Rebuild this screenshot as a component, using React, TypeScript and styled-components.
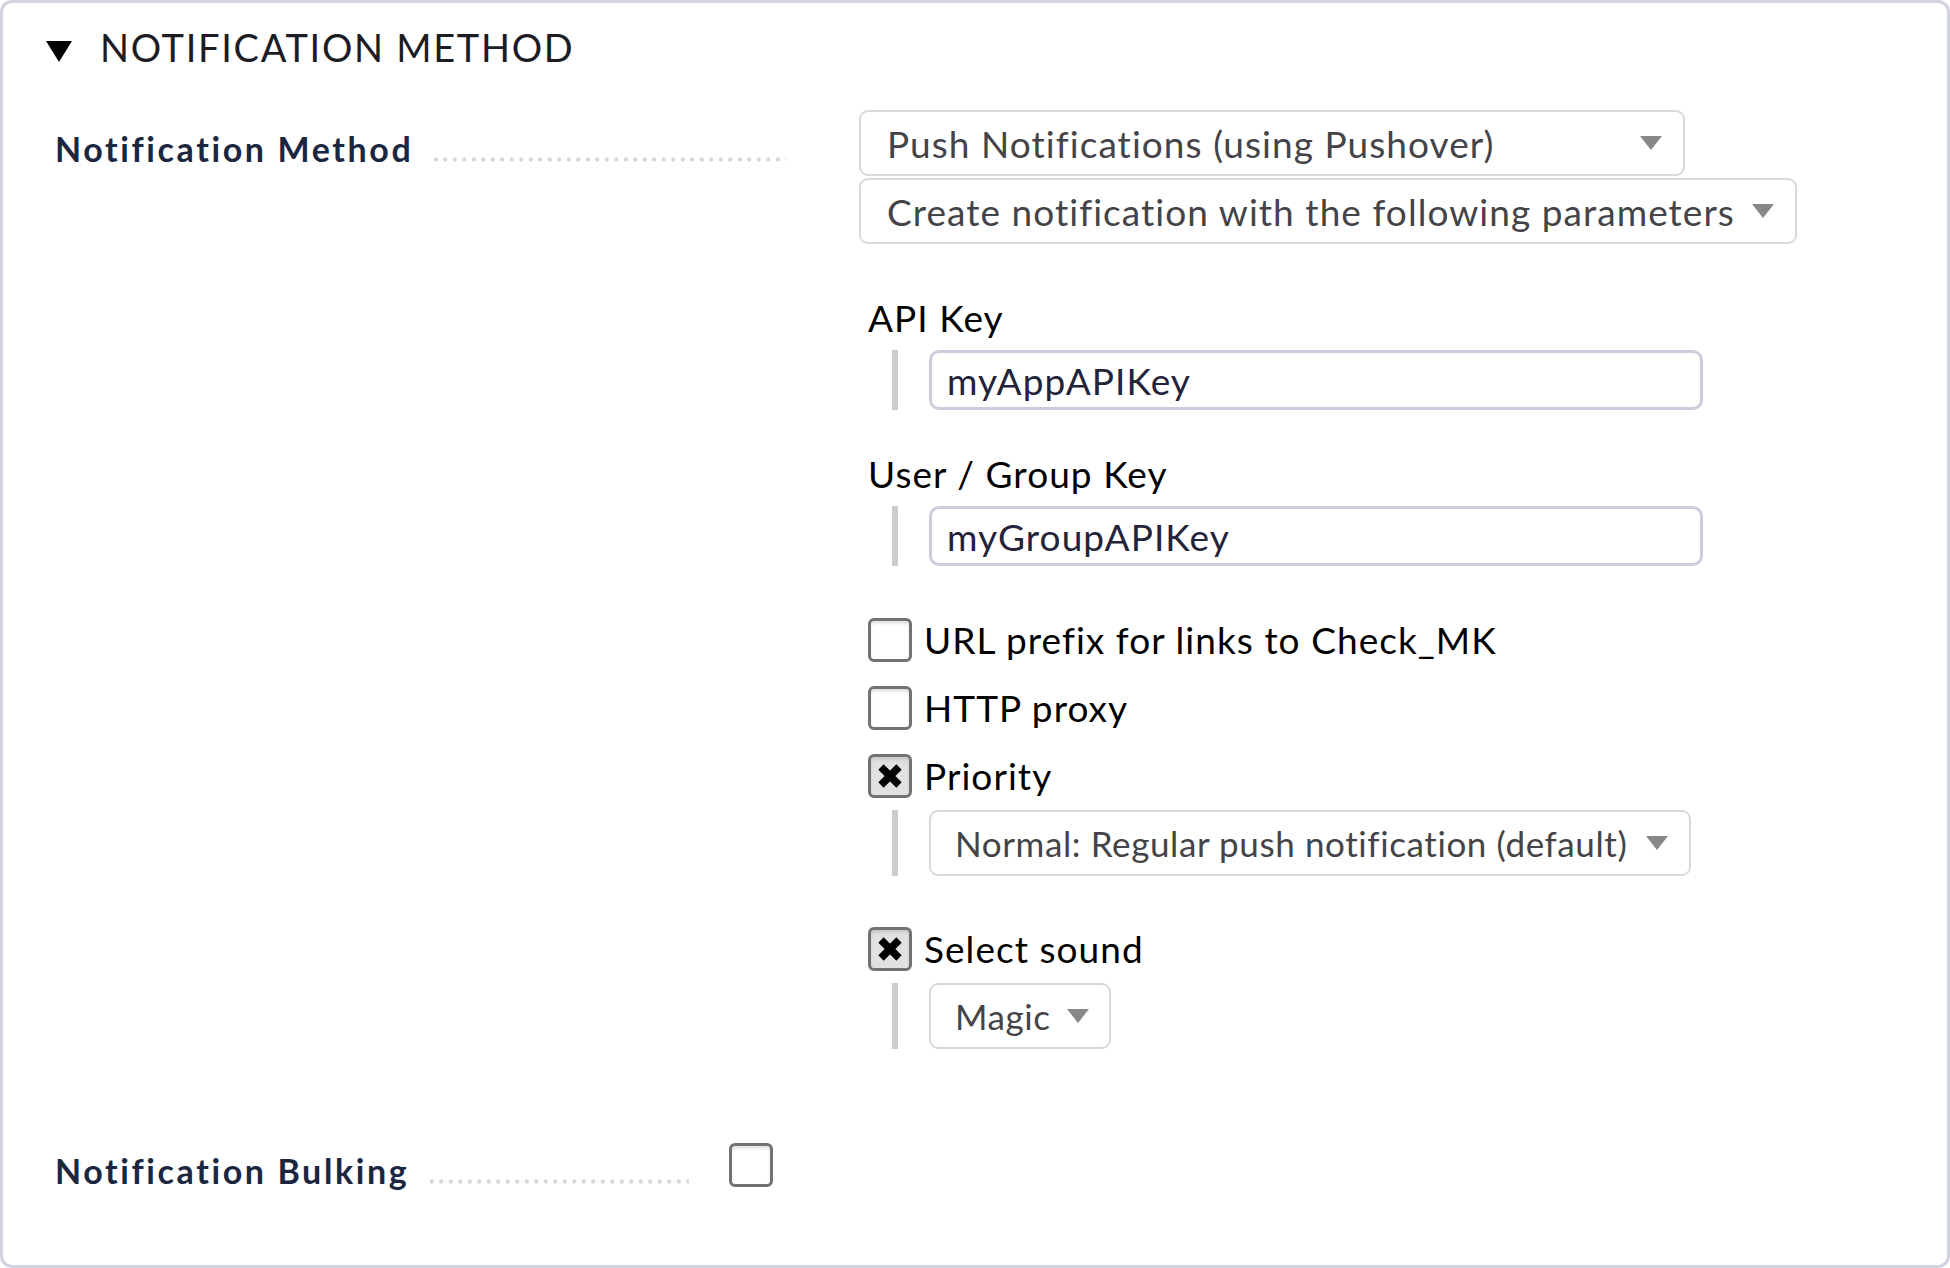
import React from "react";
import styled, { createGlobalStyle } from "styled-components";

const Global = createGlobalStyle`
  html, body { margin: 0; padding: 0; background: #ffffff; }
  body { font-family: Lato, "Open Sans", sans-serif; }
  * { box-sizing: border-box; }
`;

const Frame = styled.div`
  width: 1950px;
  height: 1268px;
  border: 3px solid #d2d3e2;
  border-radius: 12px;
  background: #ffffff;
  padding: 0 0 0 43px;
  display: flex;
  flex-direction: column;
`;

const Header = styled.div`
  display: flex;
  align-items: center;
  gap: 28px;
  height: 88px;
`;

const Caret = styled.span`
  width: 0;
  height: 0;
  border-left: 13px solid transparent;
  border-right: 13px solid transparent;
  border-top: 21px solid #000000;
  margin-top: 8px;
`;

const Title = styled.h2`
  margin: 0;
  font-family: Lato, sans-serif;
  font-weight: 400;
  font-size: 38px;
  letter-spacing: 1.7px;
  color: #1c1c24;
`;

const Row = styled.div<{ $labelWidth: number; $top: number }>`
  display: grid;
  grid-template-columns: ${(p) => p.$labelWidth}px auto;
  align-items: start;
  margin-top: ${(p) => p.$top}px;
  padding-left: 9px;
`;

const LabelCell = styled.div<{ $pad: number; $gapRight: number }>`
  display: flex;
  align-items: baseline;
  gap: 18px;
  padding-top: ${(p) => p.$pad}px;
  padding-right: ${(p) => p.$gapRight}px;
`;

const Label = styled.span`
  font-weight: 700;
  font-size: 34px;
  letter-spacing: 2.6px;
  color: #1b2640;
  white-space: nowrap;
`;

const Dots = styled.span`
  flex: 1;
  height: 5px;
  background-image: radial-gradient(circle, #d6d6da 1.9px, transparent 2.3px);
  background-size: 9.5px 5px;
  background-repeat: repeat-x;
`;

const Content = styled.div`
  display: flex;
  flex-direction: column;
  align-items: flex-start;
`;

const Select = styled.div<{ $width: number; $top?: number }>`
  width: ${(p) => p.$width}px;
  height: 66px;
  margin-top: ${(p) => p.$top ?? 0}px;
  border: 2px solid #d9d9d9;
  border-radius: 9px;
  background: #ffffff;
  display: flex;
  align-items: center;
  justify-content: space-between;
  padding: 0 21px 0 26px;
  font-size: 37px;
  letter-spacing: 1.05px;
  color: #444448;
  white-space: nowrap;
`;

const SubSelect = styled(Select)`
  padding-left: 24px;
  font-size: 35px;
  letter-spacing: 0.6px;
`;

const Arrow = styled.span`
  width: 0;
  height: 0;
  border-left: 11px solid transparent;
  border-right: 11px solid transparent;
  border-top: 14px solid #888888;
  margin-left: 16px;
  flex-shrink: 0;
`;

const Params = styled.div`
  display: flex;
  flex-direction: column;
  align-items: flex-start;
  padding-left: 9px;
  margin-top: 52px;
`;

const ParamLabel = styled.div<{ $top: number }>`
  font-size: 37px;
  letter-spacing: 1.05px;
  color: #000000;
  margin-top: ${(p) => p.$top}px;
  line-height: 44px;
`;

const Indent = styled.div<{ $top: number }>`
  margin-top: ${(p) => p.$top}px;
  margin-left: 24px;
  border-left: 6px solid #cccccc;
  padding-left: 31px;
  display: flex;
`;

const TextInput = styled.div`
  width: 774px;
  height: 60px;
  border: 3px solid #cbcbdb;
  border-radius: 10px;
  display: flex;
  align-items: center;
  padding-left: 15px;
  font-size: 37px;
  letter-spacing: 1.05px;
  color: #23233a;
`;

const CheckRow = styled.div<{ $top: number }>`
  display: flex;
  align-items: center;
  gap: 12px;
  margin-top: ${(p) => p.$top}px;
  font-size: 37px;
  letter-spacing: 1.05px;
  color: #000000;
`;

const Box = styled.span<{ $checked?: boolean; $lift?: number }>`
  width: 44px;
  height: 44px;
  margin-top: ${(p) => -(p.$lift ?? 0)}px;
  border: 3.5px solid #727272;
  border-radius: 6px;
  background: ${(p) => (p.$checked ? "#e1e1e1" : "#ffffff")};
  box-shadow: inset 0 3px 3px rgba(0, 0, 0, 0.1);
  display: inline-flex;
  align-items: center;
  justify-content: center;
  flex-shrink: 0;
`;

const XMark = () => (
  <svg width="28" height="28" viewBox="0 0 28 28">
    <path d="M5 5 L23 23 M23 5 L5 23" stroke="#000" strokeWidth="7.5" strokeLinecap="butt" />
  </svg>
);

const Checkbox = ({ checked, lift }: { checked?: boolean; lift?: number }) => (
  <Box $checked={checked} $lift={lift}>
    {checked ? <XMark /> : null}
  </Box>
);

export default function App() {
  return (
    <>
      <Global />
      <Frame>
        <Header>
          <Caret />
          <Title>NOTIFICATION METHOD</Title>
        </Header>
        <Row $labelWidth={804} $top={19}>
          <LabelCell $pad={18} $gapRight={73}>
            <Label>Notification Method</Label>
            <Dots />
          </LabelCell>
          <Content>
            <Select $width={826}>
              <span>Push Notifications (using Pushover)</span>
              <Arrow />
            </Select>
            <Select $width={938} $top={2}>
              <span>Create notification with the following parameters</span>
              <Arrow />
            </Select>
            <Params>
              <ParamLabel $top={0}>API Key</ParamLabel>
              <Indent $top={10}>
                <TextInput>myAppAPIKey</TextInput>
              </Indent>
              <ParamLabel $top={42}>User / Group Key</ParamLabel>
              <Indent $top={10}>
                <TextInput>myGroupAPIKey</TextInput>
              </Indent>
              <CheckRow $top={51}>
                <Checkbox />
                <span>URL prefix for links to Check_MK</span>
              </CheckRow>
              <CheckRow $top={23}>
                <Checkbox />
                <span>HTTP proxy</span>
              </CheckRow>
              <CheckRow $top={23}>
                <Checkbox checked />
                <span>Priority</span>
              </CheckRow>
              <Indent $top={12}>
                <SubSelect $width={762}>
                  <span>Normal: Regular push notification (default)</span>
                  <Arrow />
                </SubSelect>
              </Indent>
              <CheckRow $top={50}>
                <Checkbox checked />
                <span>Select sound</span>
              </CheckRow>
              <Indent $top={12}>
                <SubSelect $width={182}>
                  <span>Magic</span>
                  <Arrow />
                </SubSelect>
              </Indent>
            </Params>
          </Content>
        </Row>
        <Row $labelWidth={674} $top={94}>
          <LabelCell $pad={7} $gapRight={40}>
            <Label>Notification Bulking</Label>
            <Dots />
          </LabelCell>
          <Content>
            <Checkbox />
          </Content>
        </Row>
      </Frame>
    </>
  );
}
